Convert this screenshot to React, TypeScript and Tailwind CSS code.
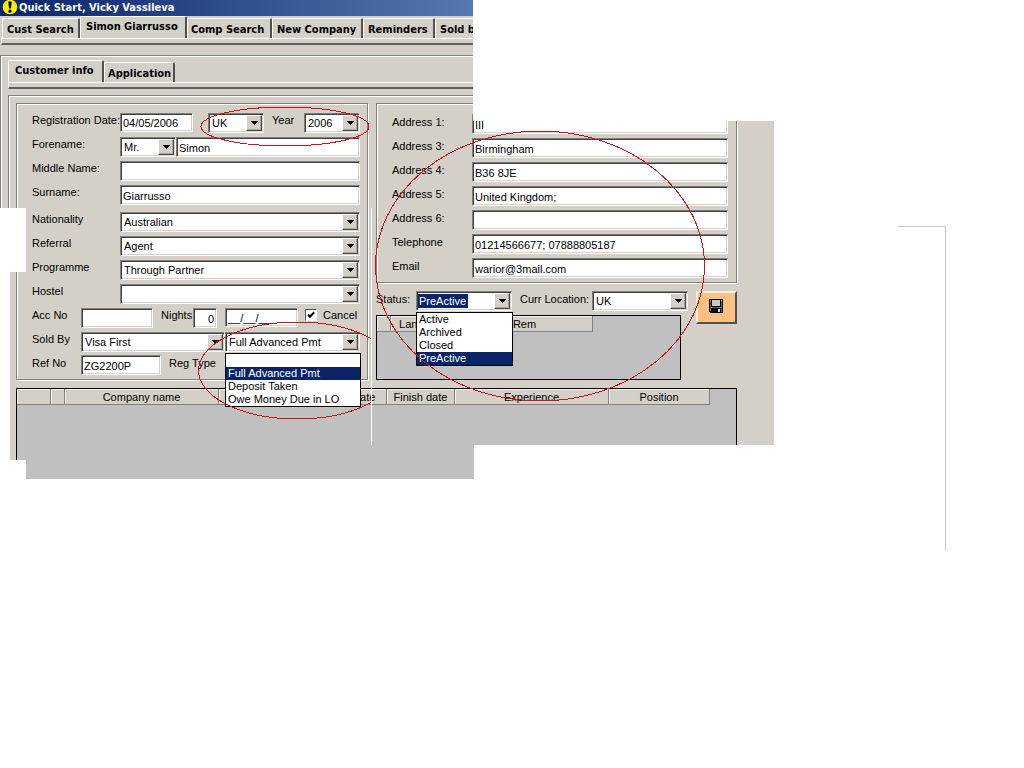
import React, { useState } from 'react';

const SUNKEN =
  'border border-t-[#808080] border-l-[#808080] border-r-white border-b-white bg-white shadow-[inset_1px_1px_0_#404040,inset_-1px_-1px_0_#d4d0c8]';

const ETCHED =
  'border border-[#808080] shadow-[inset_1px_1px_0_#ffffff,1px_1px_0_#ffffff]';

type LabelProps = { htmlFor?: string; className?: string; children: React.ReactNode };

function Label({ htmlFor, className = '', children }: LabelProps) {
  return (
    <label htmlFor={htmlFor} className={`block h-4 shrink-0 whitespace-nowrap leading-4 ${className}`}>
      {children}
    </label>
  );
}

type FieldProps = { id: string; value?: string; className?: string; label?: string };

function TextBox({ id, value = '', className = '', label }: FieldProps) {
  return (
    <input
      id={id}
      type="text"
      aria-label={label}
      defaultValue={value}
      className={`block min-w-0 rounded-none px-[2px] pt-px outline-none ${SUNKEN} ${className}`}
    />
  );
}

type ComboProps = FieldProps & { options?: string[]; open?: boolean; selectedText?: boolean };

function Combo({ id, value = '', className = '', label, options, open, selectedText }: ComboProps) {
  const [current, setCurrent] = useState(value);
  return (
    <div className={`relative flex h-5 p-px ${SUNKEN} ${className}`}>
      <select
        id={id}
        aria-label={label}
        value={current}
        onChange={(e) => setCurrent(e.target.value)}
        className={`block w-full min-w-0 appearance-none rounded-none pr-4 outline-none ${
          selectedText
            ? 'my-px h-[14px] bg-[linear-gradient(to_right,#0a246a_50px,#ffffff_50px)] pl-px leading-[14px] text-white'
            : 'h-4 bg-white pl-[2px] leading-4'
        }`}
      >
        {(options ?? [value]).map((o) => (
          <option key={o} value={o}>
            {o}
          </option>
        ))}
      </select>
      <span className="pointer-events-none absolute top-px right-px flex h-4 w-4 items-center justify-center border border-t-white border-l-white border-r-[#505050] border-b-[#505050] bg-[#d4d0c8] shadow-[inset_-1px_-1px_0_#a8a49c]">
        <svg viewBox="0 0 7 4" className="h-1 w-[7px]" shapeRendering="crispEdges" aria-hidden="true">
          <path d="M0 0h7v1H0zM1 1h5v1H1zM2 2h3v1H2zM3 3h1v1H3z" />
        </svg>
      </span>
      {open && (
        <ul
          role="listbox"
          className="absolute top-5 -right-[2px] -left-px z-10 border border-black bg-white"
        >
          {(options ?? []).map((o) => (
            <li
              key={o}
              role="option"
              aria-selected={o === current}
              className={`h-[13px] pl-[2px] leading-[13px] whitespace-nowrap ${
                o === current ? 'bg-[#0a246a] text-white' : ''
              }`}
            >
              {o}
            </li>
          ))}
        </ul>
      )}
    </div>
  );
}

function Row({ children, className = '' }: { children: React.ReactNode; className?: string }) {
  return <div className={`flex h-6 items-start ${className}`}>{children}</div>;
}

type TabProps = { label: string; active?: boolean; className?: string };

function Tab({ label, active, className = '' }: TabProps) {
  return (
    <button
      type="button"
      role="tab"
      aria-selected={!!active}
      className={`shrink-0 overflow-hidden rounded-t-xs border-t border-r-2 border-l border-t-white border-r-[#505050] border-l-white text-left whitespace-nowrap ${
        active ? 'h-[22px]' : 'h-5 pt-[3px]'
      } ${className}`}
    >
      {label}
    </button>
  );
}

function HeaderCell({ children }: { children?: React.ReactNode }) {
  return (
    <th className="h-4 overflow-hidden border-r border-b border-[#808080] bg-[#d4d0c8] p-0 pt-px text-center leading-[14px] font-normal whitespace-nowrap shadow-[inset_1px_1px_0_#f4f3f0]">
      {children}
    </th>
  );
}

function WarningIcon() {
  return (
    <svg viewBox="0 0 16 16" className="h-4 w-4" aria-hidden="true">
      <circle cx="8" cy="7" r="7.3" fill="#f8f000" />
      <path d="M6.3 1.6h3.4L9 8.6H7z" fill="#000" />
      <circle cx="8" cy="11.2" r="1.6" fill="#000" />
    </svg>
  );
}

function FloppyIcon() {
  return (
    <svg viewBox="0 0 14 14" className="h-[14px] w-[14px]" shapeRendering="crispEdges" aria-hidden="true">
      <path d="M0 0h14v14H1L0 13z" fill="#000" />
      <path d="M1 1h1v11H1zM12 2h1v11h-1zM2 8h10v1H2z" fill="#6b6b3c" />
      <path d="M3 1h8v6H3z" fill="#c8c8c8" />
      <path d="M12 1h1v1h-1z" fill="#d8d8d8" />
      <path d="M9 10h2v3H9z" fill="#d8d8d8" />
    </svg>
  );
}

const ADDRESS = [
  ['Address 1:', 'III'],
  ['Address 3:', 'Birmingham'],
  ['Address 4:', 'B36 8JE'],
  ['Address 5:', 'United Kingdom;'],
  ['Address 6:', ''],
  ['Telephone', '01214566677; 07888805187'],
  ['Email', 'warior@3mail.com'],
];

const CHOICES = [
  ['Nationality', 'Australian'],
  ['Referral', 'Agent'],
  ['Programme', 'Through Partner'],
  ['Hostel', ''],
];

function CustomerForm() {
  return (
    <section className={`h-[277px] pt-2 pr-[7px] pl-[15px] ${ETCHED}`}>
      <Row>
        <Label htmlFor="reg-date" className="w-[88px]">Registration Date:</Label>
        <TextBox id="reg-date" value="04/05/2006" className="mt-px h-[19px] w-[73px]" />
        <Combo id="office" label="Office" value="UK" className="mt-px ml-[15px] w-14" />
        <Label htmlFor="year" className="ml-2 w-8">Year</Label>
        <Combo id="year" value="2006" className="mt-px w-14" />
      </Row>
      <Row>
        <Label htmlFor="forename" className="w-[88px]">Forename:</Label>
        <Combo id="title" label="Title" value="Mr." className="mt-px w-14" />
        <TextBox id="forename" value="Simon" className="mt-px h-5 flex-1" />
      </Row>
      <Row>
        <Label htmlFor="middle" className="w-[88px]">Middle Name:</Label>
        <TextBox id="middle" className="mt-px h-5 flex-1" />
      </Row>
      <Row className="mb-[3px]">
        <Label htmlFor="surname" className="w-[88px]">Surname:</Label>
        <TextBox id="surname" value="Giarrusso" className="mt-px h-5 flex-1" />
      </Row>
      {CHOICES.map(([label, value]) => (
        <Row key={label}>
          <Label htmlFor={label} className="w-[88px]">{label}</Label>
          <Combo id={label} value={value} className="mt-px flex-1" />
        </Row>
      ))}
      <Row>
        <Label htmlFor="acc" className="w-[49px]">Acc No</Label>
        <TextBox id="acc" className="mt-px h-5 w-[72px]" />
        <Label htmlFor="nights" className="ml-2 w-8">Nights</Label>
        <TextBox id="nights" value="0" className="mt-px h-5 w-6 text-right" />
        <TextBox id="arrival" label="Arrival date" value="__/__/__" className="mt-px ml-2 h-[19px] w-[73px]" />
        <span className="relative mt-[2px] ml-[7px] flex h-3 w-3">
          <input
            id="cancel"
            type="checkbox"
            defaultChecked
            className="peer m-0 h-3 w-3 appearance-none border border-t-[#505050] border-l-[#505050] border-r-white border-b-white bg-white"
          />
          <svg
            viewBox="0 0 12 12"
            className="pointer-events-none absolute inset-0 hidden h-3 w-3 peer-checked:block"
            aria-hidden="true"
          >
            <path d="M3 5.5l2 2.2L9.2 3.2" fill="none" stroke="#000" strokeWidth="2" />
          </svg>
        </span>
        <Label htmlFor="cancel" className="ml-[6px]">Cancel</Label>
      </Row>
      <Row>
        <Label htmlFor="sold-by" className="w-[49px]">Sold By</Label>
        <Combo id="sold-by" value="Visa First" className="mt-px w-36" />
        <Combo
          id="payment"
          label="Payment"
          value="Full Advanced Pmt"
          options={['', 'Full Advanced Pmt', 'Deposit Taken', 'Owe Money Due in LO']}
          open
          className="mt-px flex-1"
        />
      </Row>
      <Row>
        <Label htmlFor="ref" className="w-[49px]">Ref No</Label>
        <TextBox id="ref" value="ZG2200P" className="h-5 w-20" />
        <span className="ml-2 leading-4">Reg Type</span>
      </Row>
    </section>
  );
}

function ContactColumn() {
  return (
    <div>
      <section className={`h-[180px] pt-[10px] pr-2 pl-[15px] ${ETCHED}`}>
        {ADDRESS.map(([label, value]) => (
          <Row key={label}>
            <Label htmlFor={label} className="w-20">{label}</Label>
            <TextBox id={label} value={value} className="h-5 flex-1" />
          </Row>
        ))}
      </section>
      <div className="mt-2 flex items-start">
        <div className="w-80">
          <Row>
            <Label htmlFor="status" className="w-10">Status:</Label>
            <Combo
              id="status"
              value="PreActive"
              options={['Active', 'Archived', 'Closed', 'PreActive']}
              open
              selectedText
              className="w-24"
            />
            <Label htmlFor="location" className="ml-2 w-[72px]">Curr Location:</Label>
            <Combo id="location" value="UK" className="w-24" />
          </Row>
          <div className="h-[65px] w-[305px] border border-black bg-[#c0c0c0]">
            <table className="w-[216px] table-fixed border-separate border-spacing-0">
              <colgroup>
                <col className="w-[14px]" />
                <col className="w-[66px]" />
                <col className="w-[136px]" />
              </colgroup>
              <thead>
                <tr>
                  <HeaderCell />
                  <HeaderCell>Language</HeaderCell>
                  <HeaderCell>Rem</HeaderCell>
                </tr>
              </thead>
            </table>
          </div>
        </div>
        <button
          type="button"
          aria-label="Save"
          className="flex h-[33px] w-[41px] items-center justify-center border-2 border-t-[#fff0e0] border-l-[#fff0e0] border-r-[#505050] border-b-[#505050] bg-[#ffc080] pr-px pb-1"
        >
          <FloppyIcon />
        </button>
      </div>
    </div>
  );
}

function EmploymentGrid() {
  return (
    <div className="mt-2 h-[91px] w-[721px] border border-b-0 border-black bg-[#c0c0c0]">
      <table className="w-[693px] table-fixed border-separate border-spacing-0">
        <colgroup>
          <col className="w-[34px]" />
          <col className="w-[14px]" />
          <col className="w-[154px]" />
          <col className="w-[98px]" />
          <col className="w-[70px]" />
          <col className="w-[68px]" />
          <col className="w-[154px]" />
          <col className="w-[101px]" />
        </colgroup>
        <thead>
          <tr>
            <HeaderCell />
            <HeaderCell />
            <HeaderCell>Company name</HeaderCell>
            <HeaderCell />
            <HeaderCell>Start date</HeaderCell>
            <HeaderCell>Finish date</HeaderCell>
            <HeaderCell>Experience</HeaderCell>
            <HeaderCell>Position</HeaderCell>
          </tr>
        </thead>
      </table>
    </div>
  );
}

function Annotations() {
  return (
    <svg
      viewBox="0 0 774 480"
      className="pointer-events-none absolute top-0 left-0 z-30 h-[480px] w-[774px]"
      fill="none"
      stroke="#c8141e"
      shapeRendering="crispEdges"
      aria-hidden="true"
    >
      <clipPath id="left-part">
        <rect x="0" y="0" width="371" height="480" />
      </clipPath>
      <ellipse cx="285" cy="126.500" rx="84" ry="19.500" />
      <ellipse cx="297" cy="370.500" rx="98.500" ry="48.500" clipPath="url(#left-part)" />
      <ellipse cx="540" cy="266" rx="164.500" ry="135" />
    </svg>
  );
}

export default function App() {
  return (
    <main className="relative min-h-screen overflow-x-hidden bg-white font-['Liberation_Sans',Arial,sans-serif] text-[11px] text-black">
      <div className="relative max-w-[774px] overflow-hidden bg-[#d4d0c8]">
        <header className="flex h-4 items-center gap-px bg-[linear-gradient(to_right,#0a246a,#5878b0_474px)] pl-[2px]">
          <WarningIcon />
          <h1 className="font-['DejaVu_Sans_Condensed','DejaVu_Sans',sans-serif] text-[11px] leading-4 font-bold text-white">
            Quick Start, Vicky Vassileva
          </h1>
        </header>

        <nav
          role="tablist"
          className="ml-[2px] flex h-[22px] items-end font-['DejaVu_Sans_Condensed','DejaVu_Sans',sans-serif] font-bold"
        >
          <Tab label="Cust Search" className="w-[78px] border-r-0 pl-1" />
          <Tab label="Simon Giarrusso" active className="w-[107px] pl-[5px]" />
          <Tab label="Comp Search" className="w-[85px] pl-[3px]" />
          <Tab label="New Company" className="w-[91px] pl-1" />
          <Tab label="Reminders" className="w-[72px] pl-1" />
          <Tab label="Sold by" className="w-20 pl-1" />
        </nav>
        <div className="ml-px h-[7px] border-t border-b-2 border-l border-t-white border-b-[#606060] border-l-white" />

        <div className="mt-[10px] border-t border-l border-[#808080] pt-[5px] pl-[7px] shadow-[inset_1px_1px_0_#ffffff]">
          <div
            role="tablist"
            className="flex h-[21px] items-end font-['DejaVu_Sans_Condensed','DejaVu_Sans',sans-serif] font-bold"
          >
            <Tab label="Customer info" active className="w-24 pl-[6px]" />
            <Tab label="Application" className="w-[71px] pl-[3px]" />
          </div>
          <div className="h-[7px] border-t border-b-2 border-l border-t-white border-b-[#606060] border-l-white" />

          <div className="mt-[6px] border-t border-l border-[#808080] pt-[7px] pl-[7px] shadow-[inset_1px_1px_0_#ffffff]">
            <div className="grid grid-cols-[352px_361px] gap-2">
              <CustomerForm />
              <ContactColumn />
            </div>
            <EmploymentGrid />
          </div>
        </div>

        <div className="absolute top-0 right-0 left-[473px] z-20 h-[121px] bg-white" />
        <div className="absolute top-[445px] right-0 bottom-0 left-[474px] z-20 bg-white" />
        <div className="absolute top-[208px] left-0 z-20 h-16 w-[26px] bg-white" />
        <div className="absolute top-[272px] bottom-0 left-0 z-20 w-[10px] bg-white" />
        <div className="absolute top-[460px] bottom-0 left-0 z-20 w-[26px] bg-white" />
        <div className="absolute top-[208px] left-[371px] z-20 h-[237px] w-px bg-white" />
      </div>

      <Annotations />
      <div className="absolute top-[226px] left-[898px] h-[325px] w-12 border-t border-r border-[#c8c8c8]" />
    </main>
  );
}
